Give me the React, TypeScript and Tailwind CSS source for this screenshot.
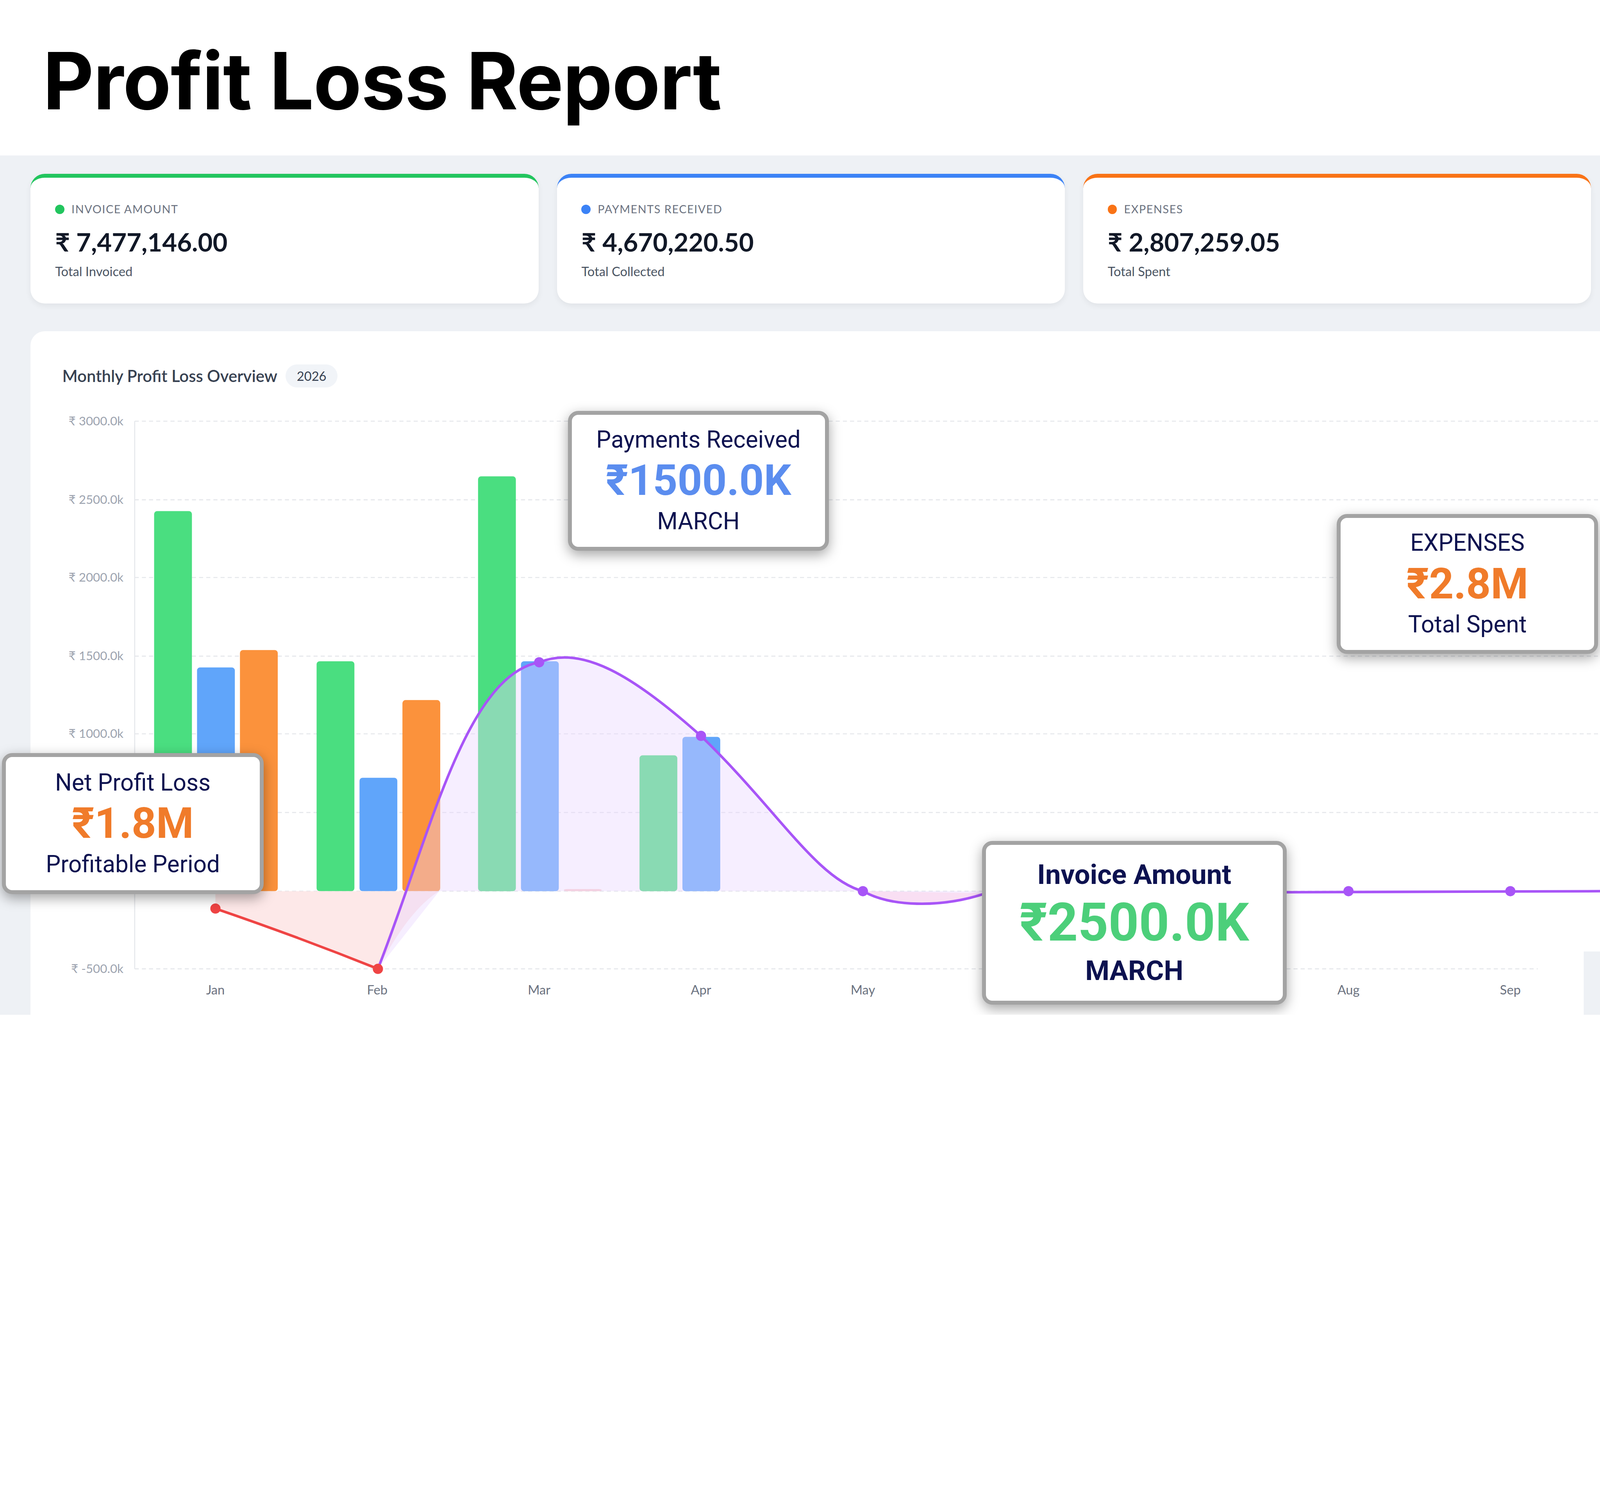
import React from "react";

const cards = [
  { label: "INVOICE AMOUNT", value: "₹ 7,477,146.00", sub: "Total Invoiced", bar: "border-t-[#22c55e]", dot: "bg-[#22c55e]" },
  { label: "PAYMENTS RECEIVED", value: "₹ 4,670,220.50", sub: "Total Collected", bar: "border-t-[#3b82f6]", dot: "bg-[#3b82f6]" },
  { label: "EXPENSES", value: "₹ 2,807,259.05", sub: "Total Spent", bar: "border-t-[#f97316]", dot: "bg-[#f97316]" },
];

const yTicks = [
  { y: 411, t: "₹ 3000.0k" },
  { y: 488, t: "₹ 2500.0k" },
  { y: 564, t: "₹ 2000.0k" },
  { y: 641, t: "₹ 1500.0k" },
  { y: 717, t: "₹ 1000.0k" },
  { y: 794, t: "₹ 500.0k" },
  { y: 871, t: "" },
  { y: 947, t: "₹ -500.0k" },
];

const months = ["Jan", "Feb", "Mar", "Apr", "May", "Jun", "Jul", "Aug", "Sep"];
const mx = (i: number) => 211 + i * 158.4;

const bars = [
  { x: 151, top: 499, c: "#4ade80" },
  { x: 193, top: 652, c: "#60a5fa" },
  { x: 235, top: 635, c: "#fb923c" },
  { x: 310, top: 646, c: "#4ade80" },
  { x: 352, top: 760, c: "#60a5fa" },
  { x: 394, top: 684, c: "#fb923c" },
  { x: 468, top: 465, c: "#4ade80" },
  { x: 510, top: 646, c: "#60a5fa" },
  { x: 552, top: 869, c: "#fbcfcf" },
  { x: 626, top: 738, c: "#4ade80" },
  { x: 668, top: 720, c: "#60a5fa" },
];

const purple =
  "M370,947 C420,820 455,660 528,647 C570,630 620,660 686,719 C760,790 800,860 845,871 C870,886 920,888 965,873 L1568,871";

function Callout({
  className,
  title,
  value,
  sub,
  valueColor,
  big,
}: {
  className: string;
  title: string;
  value: string;
  sub: string;
  valueColor: string;
  big?: boolean;
}) {
  return (
    <div
      className={`absolute flex flex-col items-center justify-center rounded-[10px] border-[4px] border-[#a3a3a3] bg-white text-[#0d1250] shadow-[0_4px_12px_rgba(0,0,0,0.35)] font-[Roboto] ${className}`}
    >
      <div className={big ? "text-[27px] font-bold leading-[34px]" : "text-[23px] leading-[30px]"}>{title}</div>
      <div className={`${valueColor} ${big ? "text-[52px] leading-[60px]" : "text-[42px] leading-[50px]"} font-bold`}>{value}</div>
      <div className={big ? "text-[27px] font-bold leading-[34px]" : "text-[23px] leading-[30px]"}>{sub}</div>
    </div>
  );
}

export default function App() {
  return (
    <div className="[zoom:2.616] w-[1568px] h-[993px] overflow-hidden bg-white relative">
      {/* Title */}
      <div className="h-[152px] flex items-center pl-[42px] pt-[6px]">
        <h1 className="text-[77px] font-bold tracking-[-0.5px] text-black font-[Inter]">
          Profit Loss Report
        </h1>
      </div>

      <div className="bg-[#eef1f5] h-[841px] pl-[30px] pt-[18px] font-[Lato]">
        {/* Summary cards */}
        <div className="flex gap-[18px]">
          {cards.map(c => (
            <div
              key={c.label}
              className={`w-[497px] h-[127px] rounded-[14px] bg-white border-t-[4px] ${c.bar} shadow-[0_2px_6px_rgba(0,0,0,0.06)] pl-[24px] pt-[24px]`}
            >
              <div className="flex items-center gap-[7px] text-[11px] tracking-[0.6px] text-[#6b7280] leading-[14px]">
                <span className={`w-[9px] h-[9px] rounded-full ${c.dot}`} />
                {c.label}
              </div>
              <div className="mt-[10px] text-[25px] font-bold text-[#111827] leading-[30px]">{c.value}</div>
              <div className="mt-[6px] text-[12.5px] text-[#4b5563] leading-[16px]">{c.sub}</div>
            </div>
          ))}
        </div>

        {/* Chart card */}
        <div className="relative mt-[27px] w-[1538px] h-[680px] rounded-tl-[14px] bg-white">
          <div className="absolute left-[31px] top-[32px] flex items-center gap-[8px]">
            <span className="text-[16px] text-[#374151] font-semibold">Monthly Profit Loss Overview</span>
            <span className="rounded-full bg-[#f1f4f8] px-[11px] py-[2px] text-[12.5px] text-[#374151]">2026</span>
          </div>
          <svg className="absolute left-0 top-0" width="1538" height="680" viewBox="30 323 1538 680">
            {yTicks.map(t => (
              <g key={t.y}>
                <line x1="132" x2={t.y === 947 ? 1505 : 1568} y1={t.y} y2={t.y} stroke="#e5e7eb" strokeDasharray="4 3" />
                <text x="121" y={t.y + 4} textAnchor="end" fontSize="12" fill="#9ca3af" fontFamily="Lato">
                  {t.t}
                </text>
              </g>
            ))}
            <line x1="132" x2="132" y1="411" y2="947" stroke="#e5e7eb" />
            {bars.map(b => (
              <rect key={b.x} x={b.x} y={b.top} width="37" height={871 - b.top} rx="3" fill={b.c} />
            ))}
            {/* red negative area */}
            <path d="M211,871 L211,888 Q290,915 370,947 C395,900 415,880 430,871 Z" fill="#fde2e2" opacity="0.8" />
            <path d="M211,888 Q290,915 370,947" stroke="#ef4444" strokeWidth="2.5" fill="none" />
            {/* purple area */}
            <path d={`${purple} L1568,871 L430,871 Z`} fill="#e9d5ff" opacity="0.4" />
            <path d="M845,871 C870,886 920,888 965,873 Z" fill="#fbcfe8" opacity="0.5" />
            <path d={purple} stroke="#a855f7" strokeWidth="2.5" fill="none" />
            <circle cx="211" cy="888" r="5" fill="#ef4444" />
            <circle cx="370" cy="947" r="5" fill="#ef4444" />
            {[2, 3, 4, 7, 8].map(i => (
              <circle key={i} cx={mx(i)} cy={i === 2 ? 647 : i === 3 ? 719 : 871} r="5" fill="#a855f7" />
            ))}
            {months.map((m, i) => (
              <text key={m} x={mx(i)} y="972" textAnchor="middle" fontSize="12.5" fill="#6b7280" fontFamily="Lato">
                {m}
              </text>
            ))}
            <rect x="1550" y="930" width="18" height="70" fill="#eef1f5" />
          </svg>
        </div>
      </div>

      {/* Overlay callouts */}
      <Callout
        className="left-[556px] top-[402px] w-[255px] h-[137px]"
        title="Payments Received"
        value="₹1500.0K"
        sub="MARCH"
        valueColor="text-[#5b8def]"
      />
      <Callout
        className="left-[1308px] top-[503px] w-[256px] h-[137px]"
        title="EXPENSES"
        value="₹2.8M"
        sub="Total Spent"
        valueColor="text-[#f07b2a]"
      />
      <Callout
        className="left-[2px] top-[737px] w-[256px] h-[138px]"
        title="Net Profit Loss"
        value="₹1.8M"
        sub="Profitable Period"
        valueColor="text-[#f07b2a]"
      />
      <Callout
        className="left-[961px] top-[823px] w-[298px] h-[160px]"
        title="Invoice Amount"
        value="₹2500.0K"
        sub="MARCH"
        valueColor="text-[#4ccf7a]"
        big
      />
    </div>
  );
}
